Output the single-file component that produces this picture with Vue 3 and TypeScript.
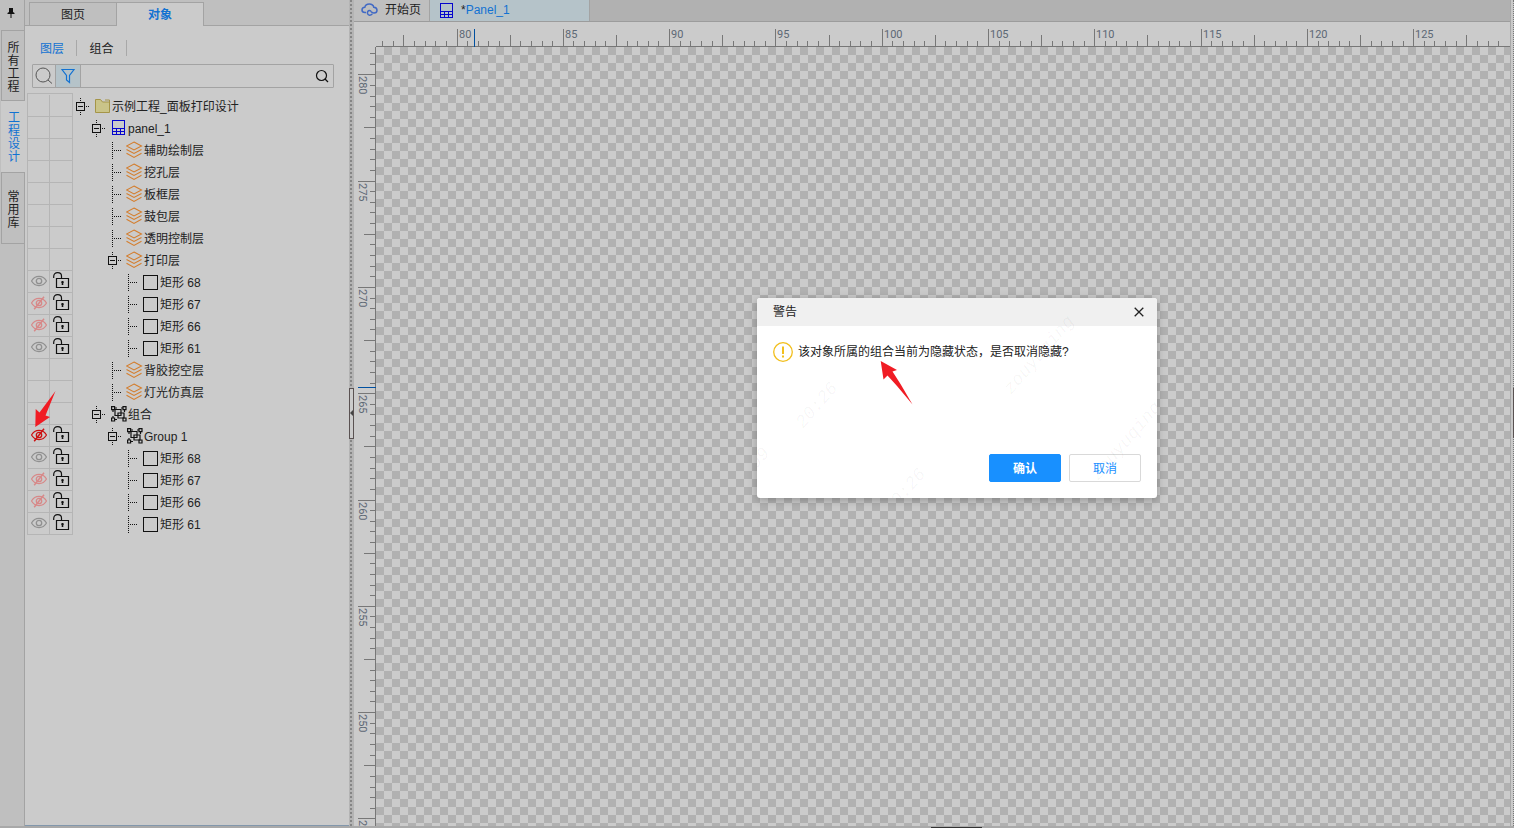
<script setup lang="ts">
import { ref } from 'vue'

type IconName = 'folder' | 'panel' | 'layer' | 'rect' | 'group'
type Eye = 'on' | 'off' | 'hidden'

interface TreeRow {
  label: string
  level: number
  icon: IconName
  open?: boolean
  eye?: Eye
}

const layer = (label: string, open = false): TreeRow => ({ label, level: 2, icon: 'layer', open })
const shape = (n: number, eye: Eye): TreeRow => ({ label: `矩形 ${n}`, level: 3, icon: 'rect', eye })

const rows: TreeRow[] = [
  { label: '示例工程_面板打印设计', level: 0, icon: 'folder', open: true },
  { label: 'panel_1', level: 1, icon: 'panel', open: true },
  layer('辅助绘制层'),
  layer('挖孔层'),
  layer('板框层'),
  layer('鼓包层'),
  layer('透明控制层'),
  layer('打印层', true),
  shape(68, 'on'),
  shape(67, 'off'),
  shape(66, 'off'),
  shape(61, 'on'),
  layer('背胶挖空层'),
  layer('灯光仿真层'),
  { label: '组合', level: 1, icon: 'group', open: true },
  { label: 'Group 1', level: 2, icon: 'group', open: true, eye: 'hidden' },
  shape(68, 'on'),
  shape(67, 'off'),
  shape(66, 'off'),
  shape(61, 'on'),
]

const sideTabs = ['所有工程', '工程设计', '常用库']
const activeSide = ref('工程设计')
const keyword = ref('')

interface Tick {
  pos: number
  size: number
  label: string
}

function makeTicks(origin: number, from: number, to: number, start: number, dir: number): Tick[] {
  const out: Tick[] = []
  for (let i = from; i <= to; i++) {
    const major = i % 10 === 0
    const size = major ? 17 : i % 5 === 0 ? 11 : 5
    out.push({ pos: Math.floor(origin + i * 10.63), size, label: major ? String(start + (dir * i) / 2) : '' })
  }
  return out
}

const hTicks = makeTicks(103, -7, 98, 80, 1)
const vTicks = makeTicks(52.8, -2, 70, 280, -1)
</script>

<template>
  <div class="app">
    <nav class="side">
      <svg class="pin" viewBox="0 0 8 10" width="8" height="10" aria-hidden="true">
        <path d="M2 0h4v4l1.5 1v1h-3v4h-1V6h-3V5L2 4z" fill="#111" />
      </svg>
      <button
        v-for="t in sideTabs"
        :key="t"
        class="side-tab"
        :class="{ active: t === activeSide }"
        @click="activeSide = t"
      >
        <span>{{ t }}</span>
      </button>
    </nav>

    <aside class="panel">
      <div class="tabs">
        <button class="tab">图页</button>
        <button class="tab active">对象</button>
      </div>
      <div class="subtabs">
        <button class="subtab active">图层</button>
        <button class="subtab">组合</button>
      </div>
      <div class="search">
        <button class="tool" aria-label="搜索">
          <svg width="18" height="18" viewBox="0 0 18 18" fill="none" stroke="#555">
            <circle cx="8" cy="8" r="7" />
            <path d="M13 13l4 3.5" />
          </svg>
        </button>
        <button class="tool filter" aria-label="筛选">
          <svg width="14" height="16" viewBox="0 0 14 16" fill="none" stroke="#1272d2" stroke-width="1.2">
            <path d="M1 1.5h12L8.5 7.5V14.5L5.5 12V7.5z" />
          </svg>
        </button>
        <input v-model="keyword" type="text" aria-label="关键字" />
        <button class="go" aria-label="查找">
          <svg width="14" height="14" viewBox="0 0 14 14" fill="none" stroke="#111" stroke-width="1.2">
            <circle cx="6.5" cy="6.5" r="5" />
            <path d="M10 10l3 3" />
          </svg>
        </button>
      </div>

      <ul class="tree">
        <li v-for="(row, i) in rows" :key="i" class="row">
          <div class="cell">
            <button v-if="row.eye" class="flag" :class="row.eye" aria-label="显示">
              <svg width="16" height="14" viewBox="0 0 16 14" fill="none" stroke="currentColor">
                <path d="M.5 7C4 .9 12 .9 15.5 7C12 13.1 4 13.1.5 7z" stroke-width="1.2" />
                <circle cx="8" cy="7" r="2.7" stroke-width="1.3" />
                <path v-if="row.eye !== 'on'" d="M13 .8L3.2 13.2" stroke-width="1.5" />
              </svg>
            </button>
          </div>
          <div class="cell last">
            <button v-if="row.eye" class="flag lock" aria-label="锁定">
              <svg width="17" height="17" viewBox="0 0 17 17" fill="none" stroke="#111" stroke-width="1.2">
                <path d="M.7 6V4.5C.7 2 2.3.7 4.7.7S8.500 2 8.500 4v3" />
                <path d="M3.500 6.500h12v9h-12z" />
                <path d="M9.500 9v4M8.300 10.300h2.400" stroke-width="1.6" />
              </svg>
            </button>
          </div>
          <div class="node" :class="'l' + row.level">
            <svg class="branch" width="18" height="22" viewBox="0 0 18 22" aria-hidden="true">
              <g fill="none" stroke="#111" shape-rendering="crispEdges">
                <template v-if="row.open">
                  <rect x=".5" y="7.5" width="8" height="8" />
                  <path d="M2 11.5h5" />
                  <path d="M4.5 3v4M4.5 17v3M10 11.5h4" stroke-dasharray="1 1" />
                </template>
                <path v-else d="M4.5 3v17M6 11.5h8" stroke-dasharray="1 1" />
              </g>
            </svg>
            <svg v-if="row.icon === 'folder'" class="icon" width="18" height="18" viewBox="0 0 18 18">
              <path d="M1.5 15.5V2.5h5l2 2.5h7v10.5z" fill="#cac489" stroke="#a59548" />
              <path d="M11 3h4.5v3" fill="none" stroke="#a59548" />
            </svg>
            <svg v-else-if="row.icon === 'panel'" class="icon" width="18" height="18" viewBox="0 0 18 18" fill="none" stroke="#0505cc" shape-rendering="crispEdges">
              <path d="M2.5 1.5h12v14h-12zM2.5 9.5h12M2.5 12.5h12M6.5 9.5v6M10.5 9.5v6" />
            </svg>
            <svg v-else-if="row.icon === 'layer'" class="icon" width="18" height="18" viewBox="2 0 18 18" fill="none" stroke="#d47d2c" stroke-width="1.1">
              <path d="M10 1L17.5 5 10 9 2.5 5zM2.5 8.5L10 12.5l7.5-4M2.5 12.2L10 16.4l7.5-4.2" />
            </svg>
            <svg v-else-if="row.icon === 'group'" class="icon" width="18" height="18" viewBox="0 0 18 18" fill="none" stroke="#111" stroke-width="1.2">
              <path d="M1.6 1.6h3v3h-3zM13 1.6h3v3h-3zM1.6 13h3v3h-3zM13 13h3v3h-3z" />
              <path d="M5 4.5h6v6H5zM8 8h6v5H8zM5 3h2M3 5v2M11 3h2M3 11v2M5 14.5h2M14.5 5v2" />
            </svg>
            <svg v-else class="icon" width="18" height="18" viewBox="0 0 18 18" fill="none" stroke="#111">
              <rect x="1.5" y="2.5" width="14" height="14" />
            </svg>
            <span class="name">{{ row.label }}</span>
          </div>
        </li>
      </ul>
    </aside>

    <div class="splitter">
      <button class="grip" aria-label="收起">
        <svg width="3" height="6" viewBox="0 0 3 6"><path d="M3 0v6L0 3z" fill="#444" /></svg>
      </button>
    </div>

    <main class="work">
      <div class="docs">
        <button class="doc start">
          <svg width="17" height="16" viewBox="0 0 17 16" fill="none" stroke="#4169c4" stroke-width="1.5">
            <path d="M5 10.5H4C2.3 10.5 1 9.5 1 8S2.2 5.4 3.8 5.3C4.2 3.2 6 2 8.3 2s4 1.2 4.5 3.2C14.8 5.3 16 6.5 16 8.2s-1.3 2.8-3 2.8c-1.5 0-2.3-.8-3-1.6" />
            <path d="M10 9.4C8.8 8.2 7.6 8.4 6.8 9.5c-.9 1.3-.2 3.5 1.7 3.7 1.2.1 2-.4 2.8-1.2" />
          </svg>
          <span>开始页</span>
        </button>
        <button class="doc current">
          <svg width="14" height="16" viewBox="0 0 14 16" fill="none" stroke="#0505cc" shape-rendering="crispEdges">
            <path d="M.5 1.5h12v14H.5zM.5 9.5h12M.5 12.5h12M4.5 9.5v6M8.5 9.5v6" />
          </svg>
          <span><i>*</i>Panel_1</span>
        </button>
      </div>
      <div class="stage">
        <svg class="hruler" aria-hidden="true">
          <g shape-rendering="crispEdges">
            <rect x="22" y="24" width="100%" height="1" fill="#777" />
            <rect v-for="t in hTicks" :key="t.pos" :x="t.pos" :y="24 - t.size" width="1" :height="t.size" fill="#777" />
            <rect x="120" y="7" width="1" height="18" fill="#0050a0" />
          </g>
          <text v-for="t in hTicks.filter((k) => k.label)" :key="t.label" :x="t.pos + 2" y="16">{{ t.label }}</text>
        </svg>
        <svg class="vruler" aria-hidden="true">
          <g transform="translate(0 -25)">
            <g shape-rendering="crispEdges">
              <rect x="21" y="25" width="1" height="100%" fill="#777" />
              <rect v-for="t in vTicks" :key="t.pos" :x="21 - t.size" :y="t.pos" :width="t.size" height="1" fill="#777" />
              <rect x="4" y="365" width="18" height="1" fill="#0050a0" />
            </g>
            <text
              v-for="t in vTicks.filter((k) => k.label)"
              :key="t.label"
              :transform="`translate(5 ${t.pos + 2}) rotate(90)`"
            >{{ t.label }}</text>
          </g>
        </svg>
        <div class="canvas"></div>
      </div>
    </main>

    <div class="edge"><div class="edge-grip"></div></div>
    <div class="foot"><div class="foot-grip"></div></div>

    <section class="dialog" role="dialog" aria-labelledby="dlg-title">
      <header>
        <h2 id="dlg-title">警告</h2>
        <button class="close" aria-label="关闭">
          <svg width="10" height="10" viewBox="0 0 10 10" stroke="#222" stroke-width="1.3"><path d="M.7.7l8.6 8.6M9.3.7L.7 9.3" /></svg>
        </button>
      </header>
      <div class="message">
        <svg width="20" height="20" viewBox="0 0 20 20">
          <circle cx="10" cy="10" r="9.3" fill="none" stroke="#f2bf1d" stroke-width="1.3" />
          <path d="M9 4.5h2v7.5H9zM9 13.5h2v2H9z" fill="#f2bf1d" />
        </svg>
        <p>该对象所属的组合当前为隐藏状态，是否取消隐藏?</p>
      </div>
      <footer>
        <button class="primary">确认</button>
        <button class="plain">取消</button>
      </footer>
      <svg class="marks" viewBox="0 0 400 200" aria-hidden="true">
        <text transform="translate(46 131) rotate(-49)">20:26</text>
        <text transform="translate(-8 180) rotate(-49)">-09</text>
        <text transform="translate(134 217) rotate(-49)">20:26</text>
        <text transform="translate(254 97) rotate(-49)">zouyuqing</text>
        <text transform="translate(341 183) rotate(-49)">zouyuqing</text>
      </svg>
    </section>

    <svg class="arrow one" width="22" height="37" viewBox="0 0 22 37" aria-hidden="true">
      <path d="M20.5 0L4.5 21.5.7 18 .3 36 15 26 10.500 24.500z" fill="#f01c24" />
    </svg>
    <svg class="arrow two" width="33" height="44" viewBox="0 0 33 44" aria-hidden="true">
      <path d="M.7 0L17 9 12.5 10.5 20.5 23 32.5 43.5 17 25 7.5 14.5 3.5 18.5z" fill="#f01c24" />
    </svg>
  </div>
</template>

<style>
body {
  margin: 0;
  background: #cbcbcb;
}
</style>

<style scoped>
.app {
  position: relative;
  display: grid;
  grid-template-columns: 25px 324px 5px 1fr 4px;
  grid-template-rows: 1fr 2px;
  height: 100vh;
  overflow: hidden;
  background: #cbcbcb;
  color: #222;
  font: 12px/16px "Liberation Sans", "Noto Sans CJK SC", sans-serif;
}
button {
  margin: 0;
  padding: 0;
  border: 0;
  background: none;
  color: inherit;
  font: inherit;
  white-space: nowrap;
  cursor: pointer;
}
svg {
  display: block;
  flex: none;
}
.side {
  display: flex;
  flex-direction: column;
  box-sizing: border-box;
  background: #bfbfbf;
  border-right: 1px solid #a3a3a3;
}
.pin {
  margin: 8px 7px 12px;
}
.side-tab {
  display: flex;
  align-items: center;
  justify-content: center;
  box-sizing: border-box;
  height: 71px;
  margin-left: 1px;
  padding: 4px 0 0 1px;
  border: 1px solid #a3a3a3;
  border-right: 0;
}
.side-tab:last-child {
  height: 72px;
}
.side-tab span {
  width: 12px;
  line-height: 13px;
  white-space: normal;
  word-break: break-all;
}
.side-tab.active {
  margin-right: -1px;
  padding-top: 2px;
  background: #cbcbcb;
  border-color: #cbcbcb;
  color: #1272d2;
}
.panel {
  display: flex;
  flex-direction: column;
  border-bottom: 1px solid #8297ac;
}
.tabs {
  display: flex;
  align-items: flex-end;
  box-sizing: border-box;
  height: 26px;
  padding-left: 4px;
  background: #bfbfbf;
  border-bottom: 1px solid #a3a3a3;
}
.tab {
  box-sizing: border-box;
  width: 88px;
  height: 23px;
  padding-top: 2px;
  border: 1px solid #a3a3a3;
  border-bottom: 0;
}
.tab.active {
  width: 87px;
  height: 24px;
  margin-bottom: -1px;
  padding-top: 0;
  background: #cbcbcb;
  border-left: 0;
  color: #1272d2;
  font-weight: 700;
}
.subtabs {
  display: flex;
  padding: 14px 0 8px 3px;
}
.subtab {
  width: 49px;
  height: 16px;
  padding-top: 1px;
  border-right: 1px solid #a8a8a8;
}
.subtab + .subtab {
  width: 50px;
}
.subtab.active {
  color: #1272d2;
}
.search {
  display: flex;
  box-sizing: border-box;
  height: 24px;
  margin: 0 15px 5px 7px;
  border: 1px solid #a3a3a3;
  border-radius: 1px;
}
.tool,
.go {
  display: flex;
  align-items: center;
  justify-content: center;
  width: 22px;
}
.filter {
  box-sizing: border-box;
  width: 26px;
  background: #b5c3c9;
  border: solid #a3a3a3;
  border-width: 0 1px;
}
.search input {
  flex: 1;
  min-width: 0;
  padding: 0 6px;
  border: 0;
  outline: 0;
  background: none;
  font: inherit;
}
.tree {
  position: relative;
  margin: 0;
  padding: 2px 0 0 2px;
  list-style: none;
}
.tree::before {
  content: "";
  position: absolute;
  top: 0;
  left: 2px;
  width: 46px;
  height: 2px;
  box-sizing: border-box;
  border: solid #b5b5b5;
  border-width: 1px 1px 0;
}
.row {
  display: flex;
  height: 22px;
}
.cell {
  display: flex;
  align-items: center;
  justify-content: center;
  box-sizing: border-box;
  width: 23px;
  padding-bottom: 2px;
  border: solid #b5b5b5;
  border-width: 0 1px 1px;
}
.cell.last {
  border-left: 0;
}
.flag.on {
  color: #909090;
}
.flag.off {
  color: #d78888;
}
.flag.hidden {
  color: #cc1010;
}
.node {
  display: flex;
  align-items: center;
  padding-left: 3px;
  white-space: nowrap;
}
.l1 {
  padding-left: 19px;
}
.l2 {
  padding-left: 35px;
}
.l3 {
  padding-left: 51px;
}
.name {
  padding-top: 2px;
}
.splitter {
  display: flex;
  align-items: center;
  background: radial-gradient(circle at 1px 1px, #858585 1px, transparent 1px) 1px 0 / 5px 4px #b4b4b4;
}
.grip {
  display: flex;
  align-items: center;
  box-sizing: border-box;
  width: 5px;
  height: 51px;
  background: #cbcbcb;
  border: 1px solid #5a5252;
}
.work {
  display: flex;
  flex-direction: column;
  min-width: 0;
  min-height: 0;
}
.docs {
  display: flex;
  box-sizing: border-box;
  height: 22px;
  background: #b1b1b1;
  border-bottom: 1px solid #9c9c9c;
}
.doc {
  display: flex;
  align-items: center;
  gap: 7px;
  box-sizing: border-box;
  padding: 0 7px 2px;
  border-right: 1px solid #a3a3a3;
}
.start {
  width: 76px;
  background: #bfbfbf;
}
.current {
  width: 160px;
  padding-left: 10px;
  background: #b5c3c9;
  color: #1272d2;
}
.current i {
  color: #222;
  font-style: normal;
}
.stage {
  display: grid;
  grid-template: 25px 1fr / 22px 1fr;
  flex: 1;
  min-height: 0;
}
.hruler {
  grid-column: 1 / 3;
  width: 100%;
  height: 25px;
}
.vruler {
  width: 22px;
  height: 100%;
  overflow: hidden;
}
.hruler text,
.vruler text {
  fill: #5d6875;
  font: 11px Roboto, sans-serif;
}
.canvas {
  background: repeating-conic-gradient(#b1b1b1 0 25%, #cbcbcb 0 50%) 0 0 / 16px 16px;
}
.edge {
  display: flex;
  align-items: center;
  justify-content: flex-end;
  border-left: 1px solid #a8a8a8;
  background: #c8c8c8;
}
.edge::before {
  content: "";
  align-self: stretch;
  margin-left: auto;
  border-left: 1px dotted #777;
}
.edge-grip {
  width: 1px;
  height: 50px;
  margin-left: -1px;
  background: #5a5252;
}
.foot {
  grid-column: 1 / -1;
  display: flex;
  align-items: flex-end;
  background: #a9a9a9;
}
.foot-grip {
  width: 51px;
  height: 1px;
  margin-left: 61.5%;
  background: #333;
}
.dialog {
  position: absolute;
  top: 298px;
  left: 757px;
  display: flex;
  flex-direction: column;
  width: 400px;
  height: 200px;
  overflow: hidden;
  background: #fff;
  border-radius: 3px;
  box-shadow: 0 2px 10px rgba(0, 0, 0, 0.28);
}
.dialog header {
  display: flex;
  align-items: center;
  justify-content: space-between;
  height: 28px;
  padding: 0 13px 0 16px;
  background: #f0f0f0;
}
.dialog h2 {
  margin: 0;
  font: inherit;
}
.message {
  display: flex;
  align-items: flex-start;
  gap: 5px;
  flex: 1;
  padding: 16px;
}
.message p {
  margin: 2px 0 0;
  white-space: nowrap;
}
.dialog footer {
  display: flex;
  justify-content: flex-end;
  gap: 8px;
  padding: 0 16px 16px;
}
.dialog footer button {
  box-sizing: border-box;
  width: 72px;
  height: 28px;
  padding-top: 2px;
  border: 1px solid #d9d9d9;
  border-radius: 2px;
  color: #1890ff;
}
.dialog footer .primary {
  background: #1890ff;
  border-color: #1890ff;
  color: #fff;
  font-weight: 700;
}
.marks {
  position: absolute;
  inset: 0;
  pointer-events: none;
}
.marks text {
  fill: rgba(0, 0, 0, 0.04);
  font: italic 18px "Liberation Mono", monospace;
}
.arrow {
  position: absolute;
  pointer-events: none;
}
.one {
  top: 391px;
  left: 35px;
}
.two {
  top: 361px;
  left: 880px;
}
</style>
